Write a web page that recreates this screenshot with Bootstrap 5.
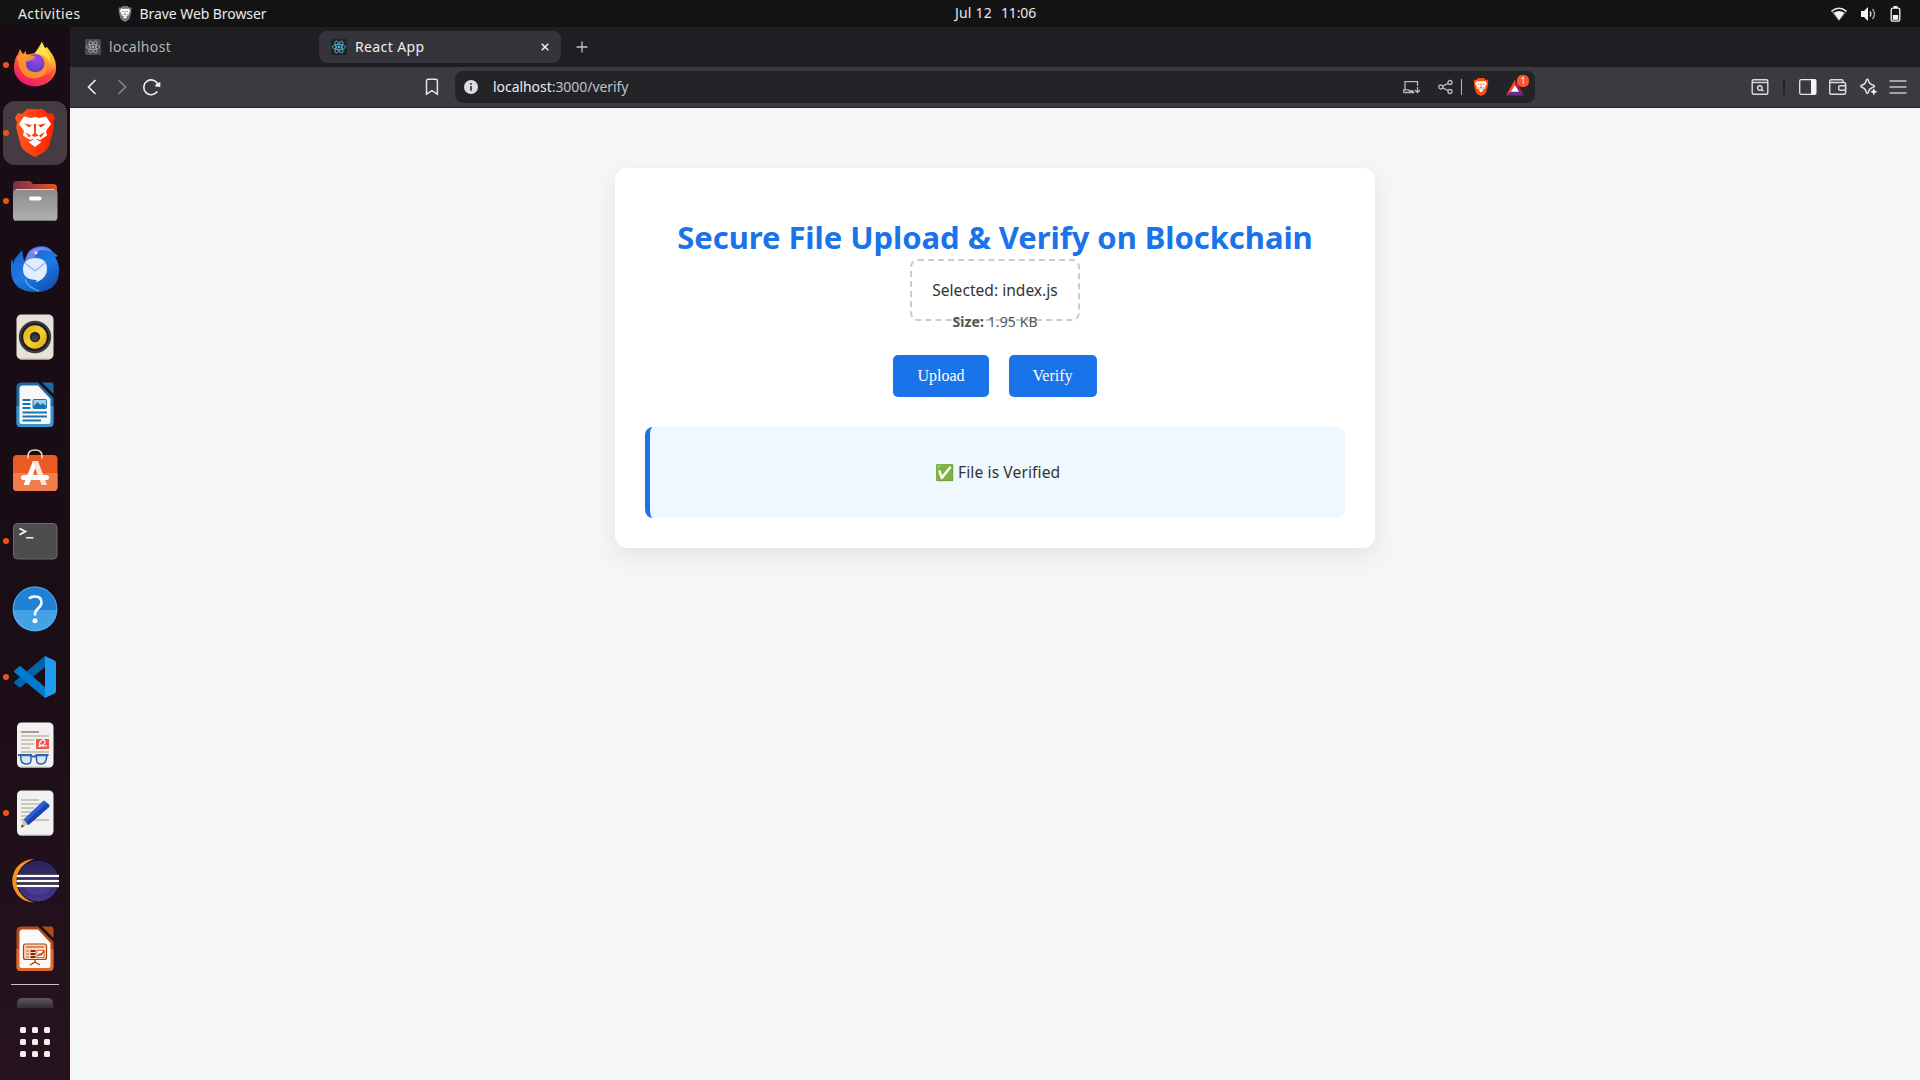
<!DOCTYPE html>
<html lang="en">
<head>
<meta charset="utf-8">
<title>React App</title>
<link rel="stylesheet" href="https://cdn.jsdelivr.net/npm/bootstrap@5.3.0/dist/css/bootstrap.min.css">
<style>
  body { font-family: "Noto Sans", "Open Sans", sans-serif; font-size: 14px; line-height: 20px; color: #333; }
  svg { display: block; flex: none; }
  .desktop { width: 1920px; height: 1080px; background: #f4f7f6; }

  /* system bar */
  .panel-top { height: 27px; background: #131313; color: #eaeaea; padding: 0 19px 0 18px; white-space: nowrap; }
  .panel-left { width: 937px; }
  .panel-left svg { margin: 0 8px 0 37px; }
  .clock { gap: 9px; margin-top: -1px; }
  .tray { gap: 14px; }

  /* dock */
  .dock { width: 70px; background: linear-gradient(180deg, #1a0c14 0%, #1b0d16 60%, #26131f 100%); padding-top: 4px; flex: none; }
  .dock-app { width: 64px; height: 64px; margin: 2px 3px; border-radius: 12px; flex: none; }
  .dock-app.current { background: #453b41; }
  .run-dot { width: 6px; height: 6px; margin-right: 2px; border-radius: 50%; flex: none; }
  .running .run-dot { background: #e95420; }
  .dock-rule { height: 1px; width: 48px; margin: 1px 0 13px 11px; background: #cbc5cb; flex: none; }
  .dock-peek { height: 10px; width: 36px; margin-left: 17px; border-radius: 5px 5px 0 0; background: linear-gradient(#5f585f, #352c35); flex: none; }
  .dock-grid { margin: 19px 0 0 20px; }

  /* browser frame */
  .tabstrip { height: 40px; background: #1f1e23; padding-top: 4px; }
  .tab-item { height: 32px; width: 242px; border-radius: 8px; padding: 0 12px; gap: 8px; }
  .tab-item.idle { width: 234px; margin: 0 7px 0 8px; padding-left: 7px; color: #b4b3b8; letter-spacing: .32px; }
  .tab-item.open { background: #35343a; color: #efeff2; letter-spacing: .38px; }
  .new-tab { margin: 10px 0 0 15px; }
  .toolbar { height: 41px; background: #3b3a3f; border-bottom: 1px solid #2b2330; padding-left: 12px; }
  .omnibox { height: 32px; width: 1080px; margin-left: 13px; border-radius: 8px; background: #242328; color: #c2c1c7; padding: 0 6px 0 9px; letter-spacing: -.05px; }
  .url-text { margin-left: 15px; }
  .host { color: #ececf0; }
  .url-rule { width: 1px; height: 16px; margin: 0 11px 0 7px; background: #b5b4b9; }
  .bar-rule { width: 2px; height: 16px; margin: 0 13px; background: #222126; }
  .rewards { width: 24px; height: 24px; margin-left: 16px; }
  .rewards-count { right: 0; top: 0; width: 12px; height: 12px; border-radius: 5px; background: #ff5329; color: #fff; font: 9px/12px "Noto Sans", sans-serif; text-align: center; letter-spacing: 0; }

  /* upload page */
  .page { padding-top: 60px; }
  .upload-box { width: 760px; height: 380px; border-radius: 12px; background: #fff; padding: 50px 30px 30px; box-shadow: 0 8px 24px rgba(0,0,0,.08); }
  .headline { color: #1a73e8; font-size: 31px; line-height: 38px; font-weight: 700; letter-spacing: -.06px; margin: 0; }
  .drop { width: 170px; height: 62px; border: 2px dashed #ccc; border-radius: 8px; margin-top: 3px; font-size: 15.6px; }
  .file-size { color: #555; margin-top: -9px; letter-spacing: .1px; }
  .action { height: 42px; background: #1a73e8; color: #fff; border: 0; border-radius: 5px; padding: 0 24px; font: 16px "Liberation Serif", serif; }
  .actions { gap: 20px; margin-top: 23px; }
  .verdict { width: 700px; height: 91px; margin-top: 30px; padding-bottom: 2px; background: #f0f8ff; border-left: 5px solid #1a73e8; border-radius: 8px; font-size: 15.6px; letter-spacing: .1px; }
  .shield, .face { fill: var(--sh); }
  .tile { fill: var(--tile); }
</style>
<script src="https://cdn.jsdelivr.net/npm/bootstrap@5.3.0/dist/js/bootstrap.bundle.min.js"></script>
</head>
<body>
<svg width="0" height="0" class="position-absolute">
  <defs>
    <linearGradient id="ffBody" x1=".85" y1="0" x2=".35" y2="1"><stop offset="0" stop-color="#ffee4a"/><stop offset=".35" stop-color="#ffa930"/><stop offset=".68" stop-color="#ff4a3a"/><stop offset="1" stop-color="#e3157f"/></linearGradient>
    <radialGradient id="ffGlobe" cx=".55" cy=".25" r=".8"><stop offset="0" stop-color="#a646f0"/><stop offset="1" stop-color="#4b3fb6"/></radialGradient>
    <linearGradient id="brv"><stop offset="0" stop-color="#ff5a1f"/><stop offset="1" stop-color="#ff2000"/></linearGradient>
    <linearGradient id="filesBack"><stop offset="0" stop-color="#76304f"/><stop offset="1" stop-color="#e25420"/></linearGradient>
    <linearGradient id="filesFront" x2="0" y2="1"><stop offset="0" stop-color="#8b8b8b"/><stop offset="1" stop-color="#b0b0b0"/></linearGradient>
    <linearGradient id="tb" x2=".6" y2="1"><stop offset="0" stop-color="#1b5fc0"/><stop offset=".6" stop-color="#1d7be6"/><stop offset="1" stop-color="#1557b8"/></linearGradient>
    <linearGradient id="rb" x2="1" y2="1"><stop offset="0" stop-color="#dcab0c"/><stop offset=".5" stop-color="#f9d137"/><stop offset="1" stop-color="#d8a208"/></linearGradient>
    <linearGradient id="ecl" x2="0" y2="1"><stop offset="0" stop-color="#2c2255"/><stop offset="1" stop-color="#45368a"/></linearGradient>
    <symbol id="lion" viewBox="0 0 40 48">
      <path d="M12 0h16l5 5 4-1 3 5-2 4 1 5-5 19q-1 3-5 6l-9 5-9-5q-4-3-5-6L1 18l1-5-2-4 3-5 4 1z" class="shield"/>
      <path d="M20 8l4 1 7-1.500 5 7.500-5 7 1 4.500-7 4.500-2.500-1-2.500 2-2.500-2-2.500 1-7-4.500 1-4.500-5-7 5-7.500 7 1.500z" fill="#fff"/>
      <path d="M9 14.500l8 1.500-3 2.500zM31 14.500l-8 1.500 3 2.500zM18.800 15h2.400l-.4 9 2.700 2.500-3.500 1.500-3.500-1.500 2.700-2.500zM10 23l6 3.500-2 2zM30 23l-6 3.500 2 2z" class="face"/>
      <path d="M13.500 33l6.500-3 6.500 3-6.500 5z" fill="#fff"/>
    </symbol>
    <symbol id="react" viewBox="0 0 16 16">
      <rect width="16" height="16" rx="1.500" class="tile"/>
      <g fill="none" stroke="currentColor" stroke-width=".8"><ellipse cx="8" cy="8" rx="6.600" ry="2.600"/><ellipse cx="8" cy="8" rx="6.600" ry="2.600" transform="rotate(60 8 8)"/><ellipse cx="8" cy="8" rx="6.600" ry="2.600" transform="rotate(120 8 8)"/></g>
      <circle cx="8" cy="8" r="1.300" fill="currentColor"/>
    </symbol>
  </defs>
</svg>

<div class="desktop d-flex flex-column overflow-hidden">
  <header class="panel-top d-flex align-items-center">
    <div class="panel-left d-flex align-items-center">
      <span style="letter-spacing:.42px">Activities</span>
      <svg width="14" height="16" style="--sh:#777"><use href="#lion" width="14" height="16"/></svg>
      <span style="letter-spacing:-.07px">Brave Web Browser</span>
    </div>
    <div class="clock d-flex"><span style="letter-spacing:.2px">Jul 12</span><span style="letter-spacing:-.15px">11:06</span></div>
    <div class="tray d-flex align-items-center ms-auto">
      <svg width="16" height="16" viewBox="0 0 16 16"><path d="M.5 5.500Q8-1 15.500 5.500" fill="none" stroke="#e8e8e8" stroke-width="1.600"/><path d="M.3 5L8 14.500 15.700 5" fill="none" stroke="#888" stroke-width=".8"/><path d="M2.500 6.800Q8 3 13.500 6.800L8 14.300z" fill="#f4f4f4"/></svg>
      <svg width="15" height="16" viewBox="0 0 15 16"><path d="M0 5h3l4-4v14l-4-4H0z" fill="#f4f4f4"/><path d="M9 5.500q1.800 2.500 0 5" fill="none" stroke="#ddd" stroke-width="1.300"/><path d="M11.500 3q4 5 0 10" fill="none" stroke="#aaa" stroke-width="1.300"/></svg>
      <svg width="11" height="16" viewBox="0 0 11 16"><path d="M3.500 0h4v2h-4z" fill="#f4f4f4"/><rect x="1.200" y="2.200" width="8.600" height="13" rx="1.600" fill="none" stroke="#f4f4f4" stroke-width="1.300"/><path d="M2.800 9h5.400v4.800H2.800z" fill="#f4f4f4"/></svg>
    </div>
  </header>

  <div class="d-flex flex-grow-1">
    <nav class="dock d-flex flex-column">
      <div class="dock-app running d-flex align-items-center"><i class="run-dot"></i>
        <svg width="48" height="48" viewBox="0 0 48 48"><path d="M24 12L31 1l3 6 2-1 5 7q4 6 4 14a21 18.500 0 0 1-42 0q0-9 4-14l2-5q2 4 3 5l3-3v4z" fill="url(#ffBody)"/><path d="M30.500 1l4 8q5 5 5 14-3-9-12-10l-4-1q6-4 7-11z" fill="#ffe14a"/><circle cx="24" cy="22.500" r="9.500" fill="url(#ffGlobe)"/><path d="M6 16q4-4 9-3 5 2 9 2l-1 3-8 3q-1 8 8 10 9 1 12-9 3 14-12 16Q9 36 7 20z" fill="#ff9a2d" opacity=".85"/><path d="M5 24q3 13 19 13 13 0 20-11-2 17-20 17Q6 42 5 24z" fill="#fb2d4c" opacity=".55"/></svg></div>
      <div class="dock-app current running d-flex align-items-center"><i class="run-dot"></i>
        <svg width="48" height="48" style="--sh:url(#brv)"><use href="#lion" x="4" width="40" height="48"/></svg></div>
      <div class="dock-app running d-flex align-items-center"><i class="run-dot"></i>
        <svg width="48" height="48" viewBox="0 0 48 48"><path d="M2 20V8q0-4 4-4h12q2 0 3 2l1 1h20q4 0 4 4v9z" fill="url(#filesBack)"/><rect x="2" y="12" width="44.500" height="32" rx="4" fill="url(#filesFront)"/><path d="M5 12.500h38" stroke="#d0d0d0"/><path d="M5 43.500h38" stroke="#777"/><rect x="18" y="19.500" width="12.500" height="4" rx="2" fill="#fff"/></svg></div>
      <div class="dock-app d-flex align-items-center"><i class="run-dot"></i>
        <svg width="48" height="48" viewBox="0 0 48 48"><path d="M3 15l8-10 2 11 4-8q4-7 14-7 7 0 11 6l5 4-3 1q4 6 4 13 0 22-24 22Q2 47 0 27q-1-9 1-13l2 5z" fill="url(#tb)"/><path d="M16 10q4-8 15-8 6 0 10 5-14-5-17 4-2 4 1 6l-11 3z" fill="#6f86e8"/><path d="M20 7q5-5 14-4-9 1-10 7z" fill="#9c82f2"/><circle cx="25" cy="7.800" r="1.500" fill="#e8e8ff"/><path d="M12 24q0-10 12-11 12 0 12 11 0 8-8 12-2 1-4 1 2-1 2-2-14 0-14-11z" fill="#e2edff"/><path d="M14 18l10 8 10-8" fill="none" stroke="#8fb2e8" stroke-width="1.200"/><path d="M14 34q2 8 14 12" stroke="#3fa5ff" stroke-width="1.500" fill="none"/></svg></div>
      <div class="dock-app d-flex align-items-center"><i class="run-dot"></i>
        <svg width="48" height="48" viewBox="0 0 48 48"><rect x="5.500" y="1.500" width="37" height="45" rx="5" fill="#e6e2d8"/><path d="M9 46h30" stroke="#bbb6a8"/><circle cx="24" cy="24" r="16.200" fill="#3c3c48"/><circle cx="24" cy="24" r="14" fill="#1d1c24"/><circle cx="24" cy="24" r="11.800" fill="url(#rb)"/><circle cx="24" cy="24" r="5.200" fill="#2a2a2e"/><circle cx="24" cy="25" r="3" fill="#3d3d42"/></svg></div>
      <div class="dock-app d-flex align-items-center"><i class="run-dot"></i>
        <svg width="48" height="48" viewBox="0 0 48 48"><path d="M10 1.500h17L42.500 17v25q0 4-4 4h-29q-4 0-4-4V6q0-4 4.500-4.500z" fill="#1c6ba5"/><path d="M5.500 25h37v17q0 4-4 4h-29q-4 0-4-4z" fill="#3695cf"/><path d="M11 4.500h16L39.500 18v23q0 2-2 2h-27q-2 0-2-2V7q0-2 2.500-2.500z" fill="#f8f8f8"/><path d="M31 1.500h9q2.500 0 2.500 2.500v9z" fill="#1c6ba5"/><path d="M11.500 19h8m-8 4h8m-8 4h8m-8 4.500h24.500m-24.500 4h24.500m-24.500 4h18.500" stroke="#1b73ae" stroke-width="1.900"/><rect x="22" y="18.500" width="13.500" height="9" rx="1" fill="#9fd0f0" stroke="#1b73ae"/><path d="M22.500 27v-2l4-4 3 3 2-2 3.500 3v2z" fill="#1b73ae"/></svg></div>
      <div class="dock-app d-flex align-items-center"><i class="run-dot"></i>
        <svg width="48" height="48" viewBox="0 0 48 48"><rect x="2" y="6" width="44.500" height="36" rx="4" fill="#ec5a24"/><path d="M2 24h44.500v14q0 4-4 4H6q-4 0-4-4z" fill="#f07d4b"/><path d="M17 9.500V7q0-6 7-6T31 7v2.500" fill="none" stroke="#f3dcae" stroke-width="1.600"/><path d="M22 12h5l-9 24h-5.500z" fill="#fff"/><path d="M21.500 12h5.500l9 24h-5.500z" fill="#fbe4d9"/><rect x="10" y="26" width="28" height="5" rx="2.500" fill="#fff"/></svg></div>
      <div class="dock-app running d-flex align-items-center"><i class="run-dot"></i>
        <svg width="48" height="48" viewBox="0 0 48 48"><rect x="2.500" y="6.500" width="43.500" height="35.500" rx="4" fill="#4d4d4d" stroke="#6a6a6a"/><path d="M8.500 11.500l6 3-6 3.200" fill="none" stroke="#fff" stroke-width="1.700"/><path d="M15 20.800h7.500" stroke="#fff" stroke-width="1.400"/></svg></div>
      <div class="dock-app d-flex align-items-center"><i class="run-dot"></i>
        <svg width="48" height="48" viewBox="0 0 48 48"><circle cx="24" cy="23.700" r="22.300" fill="#2181d6"/><path d="M1.700 25a22.300 21.500 0 0 0 44.600 0z" fill="#43a2e6"/><circle cx="24" cy="23.700" r="21.800" fill="none" stroke="#65b4ea" stroke-width=".8"/><path d="M18 13.500q2-2 6-2 6.500 0 6.500 6 0 3-3.500 6-3 2.500-3 6v1" fill="none" stroke="#fff" stroke-width="2.600"/><circle cx="24" cy="35.700" r="2.500" fill="#fff"/></svg></div>
      <div class="dock-app running d-flex align-items-center"><i class="run-dot"></i>
        <svg width="48" height="48" viewBox="0 0 48 48"><path d="M34 3v11L10 34q-1 1-2 0l-4.500-3.500q-1-1 0-2z" fill="#0065a9"/><path d="M34 45V34L10 13.500q-1-1-2 0l-4.500 4q-1 1 0 2z" fill="#007acc"/><path d="M34 3l9.500 4.500Q45 8.500 45 10v28q0 1.500-1.500 2.500L34 45z" fill="#1f9cf0"/></svg></div>
      <div class="dock-app d-flex align-items-center"><i class="run-dot"></i>
        <svg width="48" height="48" viewBox="0 0 48 48"><rect x="6" y="1.500" width="36.500" height="45" rx="4.500" fill="#f1f1f1"/><path d="M9 46h30" stroke="#c6c6c6"/><path d="M10 11h18" stroke="#a79d8b" stroke-width="2"/><path d="M10 15h28m-28 4h13m-13 4h13m-13 4h9m-9 4h28" stroke="#cbc6ba" stroke-width="2"/><rect x="25" y="18" width="13" height="10" fill="#f2554b"/><path d="M27 25.500q8-1.500 7-5t-4-.5 0 4.500 6 0" fill="none" stroke="#fff" stroke-width="1.200"/><g fill="#dbe6f2" stroke="#2a66a8" stroke-width="1.500"><path d="M9.500 34.500h10.500v4.500q0 4-4 4h-1q-4 0-5-4zM25.500 34.500h10.500l-1 4.500q-1 4-4.500 4h-1q-4 0-4-4z"/><path d="M7 34h14M24.500 34h13M20.500 36q2-1.500 4.500 0" fill="none" stroke-width="1.800"/></g></svg></div>
      <div class="dock-app running d-flex align-items-center"><i class="run-dot"></i>
        <svg width="48" height="48" viewBox="0 0 48 48"><rect x="6" y="1.500" width="36.500" height="45" rx="4.500" fill="#f1f1f1"/><path d="M9 46h30" stroke="#c6c6c6"/><path d="M10 11h18m-18 4h28m-28 4h13m-13 4h11m-11 4h9m-9 4h28" stroke="#cbc6ba" stroke-width="1.900"/><path d="M10 38.500l2.500-8 5 5z" fill="#e4bb84"/><path d="M10 38.500l1-3 2 2z" fill="#333"/><path d="M12.500 30.500L32 12q1-1 2 0l4 4q1 1 0 2L17.500 36z" fill="#2a5fd8"/><path d="M15 33l21-19 2 2q1 1 0 2L17.500 36z" fill="#1d43b0"/></svg></div>
      <div class="dock-app d-flex align-items-center"><i class="run-dot"></i>
        <svg width="48" height="48" viewBox="0 0 48 48"><path d="M23 2A21.500 21.500 0 0 0 23 45.500Q7 40 7 24T23 2z" fill="#f7941e"/><path d="M12 6A21.500 21.500 0 0 0 12 42Q5 34 5 24T12 6z" fill="#f7941e"/><circle cx="27" cy="24" r="21" fill="url(#ecl)" stroke="#120b22"/><path d="M13 30h27q-4 8-13 8t-14-8z" fill="#4b3b96"/><path d="M6 19h42M5.500 24h42.500M6 29h42" stroke="#0f0a20" stroke-width="4"/><path d="M6 19h42M5.500 24h42.500M6 29h42" stroke="#fff" stroke-width="2.300"/></svg></div>
      <div class="dock-app d-flex align-items-center"><i class="run-dot"></i>
        <svg width="48" height="48" viewBox="0 0 48 48"><path d="M10 1.500h17L42.500 17v25q0 4-4 4h-29q-4 0-4-4V6q0-4 4.500-4.500z" fill="#b84b12"/><path d="M5.500 24h37v18q0 4-4 4h-29q-4 0-4-4z" fill="#e0692a"/><path d="M11 4.500h16L39.500 18v23q0 2-2 2h-27q-2 0-2-2V7q0-2 2.500-2.500z" fill="#fafafa"/><path d="M31 1.500h9q2.500 0 2.500 2.500v9z" fill="#b84b12"/><rect x="12.500" y="19" width="23" height="15.500" rx="2" fill="#f5d5bf" stroke="#a8430f" stroke-width="1.200"/><path d="M15 22h18" stroke="#e08a53" stroke-width="2"/><path d="M15 26h3m-3 3h3m-3 3h3" stroke="#e08a53" stroke-width="1.700"/><path d="M19.500 26h5m-5 3h5m-5 3h5" stroke="#7a2d08" stroke-width="2"/><rect x="26" y="25.500" width="7" height="7" fill="#fff" stroke="#e0692a"/><path d="M27 31l2-2 1 1 3-4M24 35v2l-5 3m5-3l5 3" fill="none" stroke="#a8430f" stroke-width="1.400"/></svg></div>
      <div class="dock-rule"></div>
      <div class="dock-peek"></div>
      <svg class="dock-grid" width="30" height="30" viewBox="0 0 30 30" fill="#f2efec"><g id="gridRow"><rect width="6" height="6" rx="1.500"/><rect x="12" width="6" height="6" rx="1.500"/><rect x="24" width="6" height="6" rx="1.500"/></g><use href="#gridRow" y="12"/><use href="#gridRow" y="24"/></svg>
    </nav>

    <div class="flex-grow-1 d-flex flex-column">
      <div class="tabstrip d-flex">
        <div class="tab-item idle d-flex align-items-center">
          <svg width="16" height="16" style="--tile:#4b4b4e;color:#a9a9ac"><use href="#react" width="16" height="16"/></svg><span>localhost</span>
        </div>
        <div class="tab-item open d-flex align-items-center">
          <svg width="16" height="16" style="--tile:#20232a;color:#53c1de"><use href="#react" width="16" height="16"/></svg><span>React App</span>
          <svg class="ms-auto" width="8" height="8" viewBox="0 0 8 8"><path d="M.7.700l6.600 6.600M7.300.700L.7 7.300" stroke="#f0f0f2" stroke-width="1.500"/></svg>
        </div>
        <svg class="new-tab" width="12" height="12" viewBox="0 0 12 12"><path d="M6 .5v11M.5 6h11" stroke="#c4c3c8" stroke-width="1.300"/></svg>
      </div>

      <div class="toolbar d-flex align-items-center">
        <svg width="20" height="20" viewBox="0 0 20 20" fill="none" stroke="#f0f0f2" stroke-width="1.600"><path d="M13.500 3L6.500 10l7 7"/></svg>
        <svg style="margin-left:10px" width="20" height="20" viewBox="0 0 20 20" fill="none" stroke="#858489" stroke-width="1.600"><path d="M6.500 3l7 7-7 7"/></svg>
        <svg style="margin-left:9px" width="20" height="20" viewBox="0 0 20 20"><path d="M16.300 14.500A7.400 7.400 0 1 1 17 7.500" fill="none" stroke="#f0f0f2" stroke-width="1.600"/><path d="M19.300 5v5l-5.300-.5q.5-3.500 5.300-4.500z" fill="#f0f0f2"/></svg>
        <svg style="margin-left:261px" width="20" height="20" viewBox="0 0 20 20" fill="none" stroke="#e4e4e7" stroke-width="1.500"><path d="M4.500 17.200V4q0-1.700 1.700-1.700h7.500q1.700 0 1.700 1.700v13.200l-5.450-3.500z"/></svg>
        <div class="omnibox d-flex align-items-center">
          <svg width="14" height="14" viewBox="0 0 14 14"><circle cx="7" cy="7" r="7" fill="#dddce1"/><path d="M7 3v1.700M7 6v4.800" stroke="#35343a" stroke-width="1.700"/></svg>
          <span class="url-text"><span class="host">localhost</span>:3000/verify</span>
          <svg class="ms-auto" width="18" height="16" viewBox="0 0 18 16" fill="none" stroke="#b9b8bd" stroke-width="1.300"><path d="M3 10.500V2.700h12.500V7M1.700 13.500v-2.700h5l1 1.200h4M1.500 13.500h11M15.500 8v5M13 11l2.500 2.500L18 11"/></svg>
          <svg style="margin-left:18px" width="16" height="16" viewBox="0 0 16 16" fill="none" stroke="#b9b8bd" stroke-width="1.300"><circle cx="2.800" cy="8" r="2"/><circle cx="12" cy="3.500" r="2"/><circle cx="12" cy="12.500" r="2"/><path d="M4.700 7.200l5.500-2.800M4.700 8.900l5.500 2.700"/></svg>
          <span class="url-rule"></span>
          <svg width="16" height="18" style="--sh:#fb4f0a"><use href="#lion" width="16" height="18"/></svg>
          <div class="rewards position-relative">
            <svg width="24" height="24" viewBox="0 0 24 24"><path d="M10 4.500L1 20.500l5.500-3.500L10 10.500z" fill="#ff4724"/><path d="M10 4.500L19 20.500l-5.500-3.500L10 10.500z" fill="#9e1f63"/><path d="M1 20.500h18l-5.500-4h-7z" fill="#662d91"/><path d="M10 10l-4 6.700h8z" fill="#fff"/></svg>
            <span class="rewards-count position-absolute">1</span>
          </div>
        </div>
        <svg style="margin-left:215px" width="20" height="20" viewBox="0 0 20 20" fill="none" stroke="#dcdcdf" stroke-width="1.400"><rect x="2.200" y="2.700" width="15.600" height="14.600" rx="1.500"/><path d="M2 5.500h16"/><circle cx="9.800" cy="11" r="2.200"/><path d="M11.500 12.500l2 1.800"/></svg>
        <span class="bar-rule"></span>
        <svg width="20" height="20" viewBox="0 0 20 20"><rect x="1.700" y="2.700" width="16" height="14.600" rx="1.500" fill="none" stroke="#e6e6e9" stroke-width="1.300"/><path d="M13 2.500h5.300v15H13z" fill="#f4f4f6"/></svg>
        <svg style="margin-left:10px" width="20" height="20" viewBox="0 0 20 20" fill="none" stroke="#dcdcdf" stroke-width="1.400"><path d="M15 5V4q0-1.300-1.300-1.300H3.500Q1.700 2.700 1.700 4.500v11q0 1.800 1.800 1.800h12.300q1.800 0 1.800-1.800v-8.500q0-1.500-1.500-1.500H2"/><path d="M17.500 8.800h-5.300q-1.500 0-1.500 1.500v1.500q0 1.500 1.500 1.500h5.300z"/></svg>
        <svg style="margin-left:10px" width="20" height="20" viewBox="0 0 20 20"><path d="M9.300 2.300q.8 0 1.200 1.500.8 3.400 4.200 4.200 1.800.5 1.800 1.300t-1.800 1.200q-3.400.8-4.200 4.200-.4 1.800-1.200 1.800t-1.200-1.800Q7.300 11.300 4.400 10.500 2.700 10 2.700 9.300T4.500 8q3-.8 3.600-4.200.4-1.500 1.200-1.500z" fill="none" stroke="#e6e6e9" stroke-width="1.400"/><path d="M15.800 11.500v6.500M12.500 14.800h7" stroke="#3b3a3f" stroke-width="3.500"/><path d="M15.800 11.800l.8 2.200 2.200.8-2.200.8-.8 2.200-.8-2.200-2.200-.8 2.200-.8z" fill="#fff" stroke="#fff" stroke-width=".6"/></svg>
        <svg style="margin-left:10px" width="20" height="20" viewBox="0 0 20 20"><path d="M1.500 4h17M1.500 10h17M1.500 16h17" stroke="#c6c6ca" stroke-width="1.700"/></svg>
      </div>

      <main class="page d-flex justify-content-center align-items-start">
        <section class="upload-box d-flex flex-column align-items-center">
          <h1 class="headline text-nowrap">Secure File Upload &amp; Verify on Blockchain</h1>
          <div class="drop d-flex align-items-center justify-content-center text-nowrap">Selected: index.js</div>
          <div class="file-size"><b>Size:</b> 1.95 KB</div>
          <div class="actions d-flex">
            <button type="button" class="action">Upload</button>
            <button type="button" class="action">Verify</button>
          </div>
          <div class="verdict d-flex align-items-center justify-content-center">✅ File is Verified</div>
        </section>
      </main>
    </div>
  </div>
</div>
</body>
</html>
